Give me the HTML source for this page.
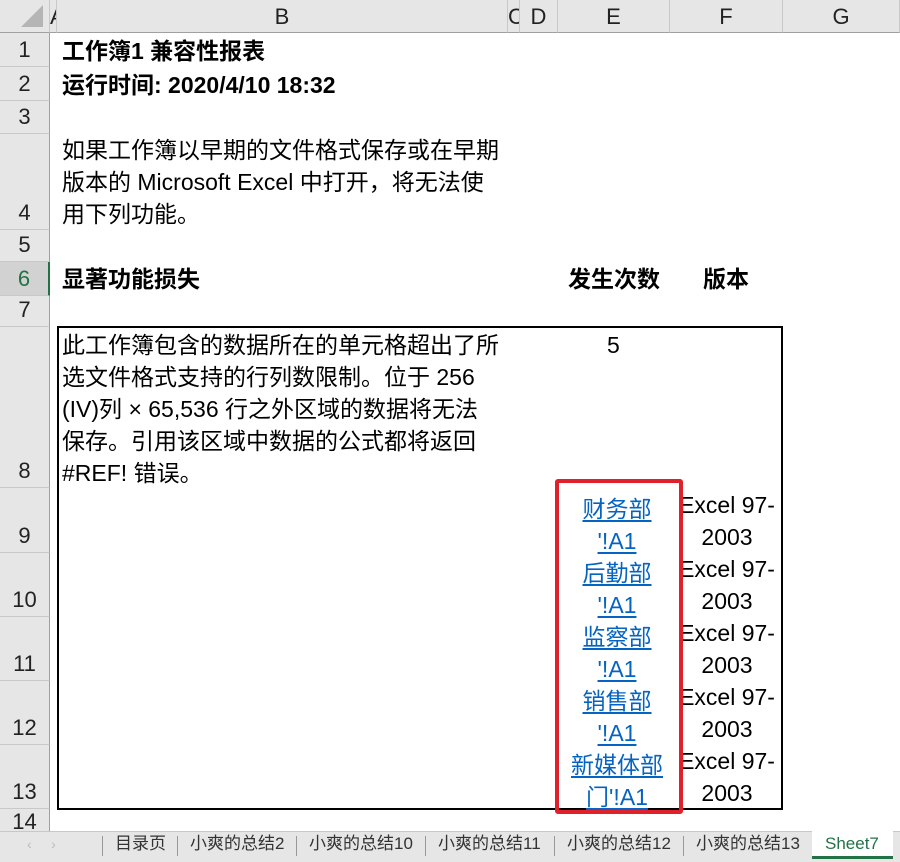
<!DOCTYPE html>
<html><head><meta charset="utf-8"><style>
*{margin:0;padding:0;box-sizing:border-box}
body{width:900px;height:862px;overflow:hidden;background:#fff;position:relative;font-family:"Liberation Sans","Noto Sans CJK SC",sans-serif;color:#000}
.a{position:absolute}
.ch{position:absolute;top:0;height:33px;background:#e6e6e6;border-right:1px solid #c8c8c8;border-bottom:1px solid #a0a0a0;font-size:22px;text-align:center;line-height:33px;color:#222;overflow:hidden}
.rh{position:absolute;left:0;width:50px;background:#e6e6e6;border-right:1px solid #a0a0a0;border-bottom:1px solid #c8c8c8;font-size:22px;text-align:center;color:#222;display:flex;align-items:flex-end;justify-content:center;padding-bottom:1px;line-height:30px}
.t{position:absolute;font-size:23px;line-height:32px;white-space:nowrap}
.b{font-weight:bold}
.lk{color:#0563c1;text-decoration:underline;text-underline-offset:3px}
.tab{position:absolute;top:832px;height:30px;font-size:17px;line-height:24px;color:#333;white-space:nowrap}
</style></head><body>
<div class="ch" style="left:0;width:50px"><div style="position:absolute;right:6px;bottom:5px;width:0;height:0;border-left:22px solid transparent;border-bottom:22px solid #b5b5b5"></div></div>
<div class="ch" style="left:50px;width:7px;text-align:left">A</div>
<div class="ch" style="left:57px;width:451px">B</div>
<div class="ch" style="left:508px;width:12px;text-align:left">C</div>
<div class="ch" style="left:520px;width:38px">D</div>
<div class="ch" style="left:558px;width:112px">E</div>
<div class="ch" style="left:670px;width:113px">F</div>
<div class="ch" style="left:783px;width:117px">G</div>

<div class="rh" style="top:33px;height:34px">1</div>
<div class="rh" style="top:67px;height:34px">2</div>
<div class="rh" style="top:101px;height:33px">3</div>
<div class="rh" style="top:134px;height:96px">4</div>
<div class="rh" style="top:230px;height:32px">5</div>
<div class="rh" style="top:262px;height:34px;background:#d2d2d2;color:#217346;border-right:2px solid #217346">6</div>
<div class="rh" style="top:296px;height:31px">7</div>
<div class="rh" style="top:327px;height:161px">8</div>
<div class="rh" style="top:488px;height:65px">9</div>
<div class="rh" style="top:553px;height:64px">10</div>
<div class="rh" style="top:617px;height:64px">11</div>
<div class="rh" style="top:681px;height:64px">12</div>
<div class="rh" style="top:745px;height:64px">13</div>
<div class="rh" style="top:809px;height:30px">14</div>

<div class="t b" style="left:62px;top:35px">工作簿1 兼容性报表</div>
<div class="t b" style="left:62px;top:69px">运行时间: 2020/4/10 18:32</div>
<div class="t" style="left:62px;top:134px">如果工作簿以早期的文件格式保存或在早期<br>版本的 Microsoft Excel 中打开，将无法使<br>用下列功能。</div>
<div class="t b" style="left:62px;top:263px">显著功能损失</div>
<div class="t b" style="left:568px;top:263px">发生次数</div>
<div class="t b" style="left:703px;top:263px">版本</div>

<div class="a" style="left:57px;top:326px;width:726px;height:484px;border:2px solid #000"></div>
<div class="t" style="left:62px;top:329px">此工作簿包含的数据所在的单元格超出了所<br>选文件格式支持的行列数限制。位于 256<br>(IV)列 × 65,536 行之外区域的数据将无法<br>保存。引用该区域中数据的公式都将返回<br>#REF! 错误。</div>
<div class="t" style="left:607px;top:329px">5</div>

<div class="a" style="left:680px;top:488px;width:100px;height:320px;overflow:hidden">
<div class="t" style="left:-55px;top:1px;width:204px;text-align:center">Excel 97-<br>2003</div>
<div class="t" style="left:-55px;top:65px;width:204px;text-align:center">Excel 97-<br>2003</div>
<div class="t" style="left:-55px;top:129px;width:204px;text-align:center">Excel 97-<br>2003</div>
<div class="t" style="left:-55px;top:193px;width:204px;text-align:center">Excel 97-<br>2003</div>
<div class="t" style="left:-55px;top:257px;width:204px;text-align:center">Excel 97-<br>2003</div>
</div>

<div class="a" style="left:557px;top:488px;width:120px;height:320px">
<div class="t lk" style="left:0;top:5px;width:120px;text-align:center">财务部<br>'!A1</div>
<div class="t lk" style="left:0;top:69px;width:120px;text-align:center">后勤部<br>'!A1</div>
<div class="t lk" style="left:0;top:133px;width:120px;text-align:center">监察部<br>'!A1</div>
<div class="t lk" style="left:0;top:197px;width:120px;text-align:center">销售部<br>'!A1</div>
<div class="t lk" style="left:0;top:261px;width:120px;text-align:center">新媒体部<br>门'!A1</div>
</div>
<div class="a" style="left:555px;top:479px;width:128px;height:335px;border:4px solid #e0202a;border-radius:3px"></div>

<div class="a" style="left:0;top:831px;width:900px;height:31px;background:#e6e6e6;border-top:1px solid #c8c8c8"></div>
<div class="tab" style="left:27px;color:#bbb;font-size:14px">‹&nbsp;&nbsp;&nbsp;&nbsp;&nbsp;›</div>
<div class="a" style="left:102px;top:836px;width:1px;height:20px;background:#999"></div>
<div class="tab" style="left:115px">目录页</div>
<div class="a" style="left:177px;top:836px;width:1px;height:20px;background:#999"></div>
<div class="tab" style="left:190px">小爽的总结2</div>
<div class="a" style="left:296px;top:836px;width:1px;height:20px;background:#999"></div>
<div class="tab" style="left:309px">小爽的总结10</div>
<div class="a" style="left:425px;top:836px;width:1px;height:20px;background:#999"></div>
<div class="tab" style="left:438px">小爽的总结11</div>
<div class="a" style="left:554px;top:836px;width:1px;height:20px;background:#999"></div>
<div class="tab" style="left:567px">小爽的总结12</div>
<div class="a" style="left:683px;top:836px;width:1px;height:20px;background:#999"></div>
<div class="tab" style="left:696px">小爽的总结13</div>
<div class="a" style="left:812px;top:831px;width:81px;height:28px;background:#fff;border-bottom:3px solid #217346"></div>
<div class="tab" style="left:825px;color:#217346">Sheet7</div>
</body></html>
